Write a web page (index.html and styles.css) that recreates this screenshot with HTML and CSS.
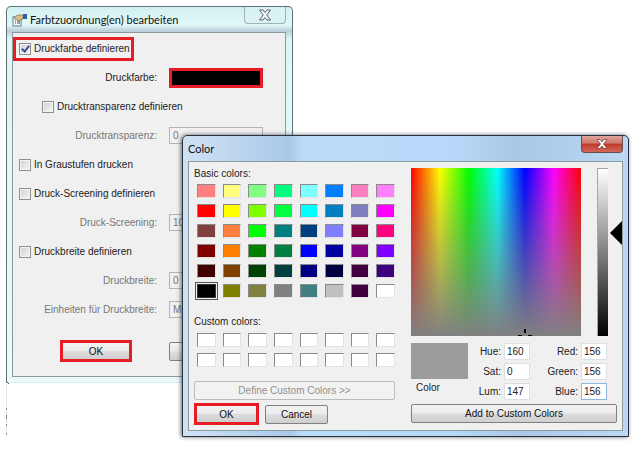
FILE: index.html
```
<!DOCTYPE html>
<html lang="de">
<head>
    <meta charset="utf-8">
    <title>Farbtzuordnung(en) bearbeiten</title>
    <meta name="viewport" content="width=device-width, initial-scale=1.0">
    <link rel="stylesheet" href="styles.css">
</head>
<body>
    <!-- Plot settings window -->
    <section class="window settings-window">
        <header class="titlebar">
            <svg class="app-icon" width="15" height="14" viewBox="0 0 15 14" aria-hidden="true">
                <rect x="1" y="4" width="8" height="9" fill="#f4f8fb" stroke="#56809c"/>
                <path d="M3 8h1M3 10h1M5 8h3M5 10h3" stroke="#456"/>
                <path d="M2 4l4-2 5 0v4l-3 1-1 2-1-2-3-1z" fill="#d9c08a" stroke="#80704c" stroke-width=".7"/>
                <rect x="11" y="1" width="4" height="5" fill="#2a62b8"/>
            </svg>
            <h1 class="title">Farbtzuordnung(en) bearbeiten</h1>
            <button class="close-btn close-glass" aria-label="Schließen">
                <svg width="14" height="12" viewBox="0 0 14 12"><path d="M1.500 1h3.500l2 2.500 2-2.500h3.500l-3.700 5 3.700 5h-3.500l-2-2.500-2 2.500h-3.500l3.700-5z" fill="#f4f8f8" stroke="#5c6468"/></svg>
            </button>
        </header>
        <form class="client settings-form">
            <div class="row"><label class="check marked"><input type="checkbox" checked>Druckfarbe definieren</label></div>
            <div class="row field-row">
                <label for="farbe">Druckfarbe:</label>
                <button type="button" id="farbe" class="ink marked" aria-label="Druckfarbe"></button>
            </div>
            <div class="row indent"><label class="check"><input type="checkbox">Drucktransparenz definieren</label></div>
            <div class="row field-row off">
                <label for="transparenz">Drucktransparenz:</label>
                <input type="text" id="transparenz" value="0" disabled>
            </div>
            <div class="row"><label class="check"><input type="checkbox">In Graustufen drucken</label></div>
            <div class="row"><label class="check"><input type="checkbox">Druck-Screening definieren</label></div>
            <div class="row field-row off">
                <label for="screening">Druck-Screening:</label>
                <input type="text" id="screening" value="100" disabled>
            </div>
            <div class="row"><label class="check"><input type="checkbox">Druckbreite definieren</label></div>
            <div class="row field-row off">
                <label for="breite">Druckbreite:</label>
                <input type="text" id="breite" value="0" disabled>
            </div>
            <div class="row field-row off">
                <label for="einheiten">Einheiten für Druckbreite:</label>
                <select id="einheiten" disabled><option>Millimeter</option></select>
            </div>
            <div class="settings-buttons">
                <span class="marked"><button type="button" class="btn">OK</button></span>
                <button type="button" class="btn" aria-label="Abbrechen"></button>
            </div>
        </form>
    </section>

    <svg class="specks" width="3" height="56" viewBox="0 0 3 56" aria-hidden="true">
        <path d="M0 0l3 3" stroke="#555"/>
        <path d="M.5 4v50" stroke="#e4e4e4"/>
        <path d="M.5 27v2M.5 34v4M.5 43v2M.5 52v2" stroke="#888"/>
    </svg>

    <!-- Color picker window -->
    <section class="window color-window" lang="en">
        <header class="titlebar">
            <h2 class="title">Color</h2>
            <button class="close-btn close-red" aria-label="Close">
                <svg width="12" height="10" viewBox="0 0 12 10"><path d="M1 .5h3l2 2.500 2-2.500h3l-3.500 4.500 3.500 4.500h-3l-2-2.500-2 2.500h-3l3.500-4.500z" fill="#fff" stroke="#6e3a38" stroke-width=".7"/></svg>
            </button>
        </header>
        <form class="client picker">
            <div class="palette">
                <p class="caption">Basic colors:</p>
                <div class="swatches" id="basic"></div>
                <p class="caption custom-caption">Custom colors:</p>
                <div class="swatches" id="custom"></div>
                <button type="button" class="btn define-btn" disabled>Define Custom Colors &gt;&gt;</button>
                <div class="picker-buttons">
                    <span class="marked"><button type="button" class="btn">OK</button></span>
                    <button type="button" class="btn">Cancel</button>
                </div>
            </div>
            <div class="mixer">
                <div class="fields">
                    <div class="spectrum">
                        <svg class="cross" width="14" height="7" viewBox="0 0 14 7" aria-hidden="true"><path d="M6 0h2v4h-2zM0 6h4v1h-4zM10 6h4v1h-4z"/></svg>
                    </div>
                    <div class="lum-bar"></div>
                    <svg class="lum-arrow" width="12" height="24" viewBox="0 0 12 24" aria-hidden="true"><path d="M12 0v24l-12-12z"/></svg>
                </div>
                <div class="values">
                    <div class="preview">
                        <div class="preview-color"></div>
                        <span>Color</span>
                    </div>
                    <div class="numbers">
                        <label for="hue">Hue:</label><input type="text" id="hue" value="160">
                        <label for="red">Red:</label><input type="text" id="red" value="156">
                        <label for="sat">Sat:</label><input type="text" id="sat" value="0">
                        <label for="green">Green:</label><input type="text" id="green" value="156">
                        <label for="lum">Lum:</label><input type="text" id="lum" value="147">
                        <label for="blue">Blue:</label><input type="text" id="blue" class="active" value="156">
                    </div>
                </div>
                <button type="button" class="btn add-btn">Add to Custom Colors</button>
            </div>
        </form>
    </section>

    <script>
        const basicColors = [
            '#ff8080', '#ffff80', '#80ff80', '#00ff80', '#80ffff', '#0080ff', '#ff80c0', '#ff80ff',
            '#ff0000', '#ffff00', '#80ff00', '#00ff40', '#00ffff', '#0080c0', '#8080c0', '#ff00ff',
            '#804040', '#ff8040', '#00ff00', '#008080', '#004080', '#8080ff', '#800040', '#ff0080',
            '#800000', '#ff8000', '#008000', '#008040', '#0000ff', '#0000a0', '#800080', '#8000ff',
            '#400000', '#804000', '#004000', '#004040', '#000080', '#000040', '#400040', '#400080',
            '#000000', '#808000', '#808040', '#808080', '#408080', '#c0c0c0', '#400040', '#ffffff'
        ];

        function addSwatches(id, colors, selected) {
            const box = document.getElementById(id);
            colors.forEach((color, i) => {
                const btn = document.createElement('button');
                btn.type = 'button';
                btn.className = i === selected ? 'swatch selected' : 'swatch';
                btn.style.backgroundColor = color;
                btn.setAttribute('aria-label', color);
                box.appendChild(btn);
            });
        }

        addSwatches('basic', basicColors, 40);
        addSwatches('custom', Array(16).fill('#ffffff'), -1);
    </script>
</body>
</html>
```
FILE: styles.css
```
* {
    box-sizing: border-box;
}
body {
    margin: 0;
    min-height: 100vh;
    background: #fff;
    color: #222;
    font-family: "Liberation Sans", Arial, sans-serif;
    font-size: 10px;
    line-height: 12px;
}
button, input, select {
    font: inherit;
    color: inherit;
    margin: 0;
    padding: 0;
}
/* Windows */
.window {
    position: absolute;
    border: 1px solid #5f7376;
    border-radius: 5px 5px 0 0;
}
.settings-window {
    left: 6px;
    top: 6px;
    width: 45%;
    padding: 0 6px 5px 5px;
    background: linear-gradient(#d2f0f0, #e2f8f9 18px, #b9cfda 24px, #dff5f6 32px, #eafafa);
    border-bottom-color: #d5eeee;
}
.color-window {
    left: 182px;
    right: 8px;
    top: 135px;
    padding: 0 5px 5px;
    border-color: #26323f;
    background: linear-gradient(90deg, #cfe2f5, #a9c8e8 24%, #bcdcfb 27%, #b7d8f8 60%, #a9c8e6 75%, #bcd8f3);
    box-shadow: -1px 0 4px rgba(0, 0, 0, 0.6);
}
.titlebar {
    display: flex;
    align-items: center;
    height: 25px;
}
.title {
    flex: 1;
    margin: 0;
    font-family: Lato, "Noto Sans", sans-serif;
    font-size: 11px;
    line-height: 16px;
    font-weight: normal;
    color: #111;
}
.app-icon {
    margin-right: 3px;
}
.close-btn {
    display: flex;
    align-items: center;
    justify-content: center;
    align-self: flex-start;
    width: 42px;
    height: 17px;
    border: 1px solid #9fb3b6;
    border-top: 0;
    border-radius: 0 0 4px 4px;
}
.close-glass {
    background: #d9f3f4;
}
.close-red {
    border-color: #6b4a50;
    background: linear-gradient(#e0a49c, #d0776c 45%, #bd3a2b 50%, #d4685a);
}
.client {
    border: 1px solid #8b9a9d;
    background: #f0f0f0;
}
.marked {
    border: 3px solid #e81c24;
}
/* Remains of the window behind */
.specks {
    position: absolute;
    left: 6px;
    top: 381px;
}
/* Settings form */
.settings-form {
    padding: 1px 0 14px;
}
.row {
    display: flex;
    align-items: center;
    height: 29px;
    padding-left: 6px;
}
.indent {
    padding-left: 29px;
}
.check {
    display: flex;
    align-items: center;
    gap: 3px;
}
.check.marked {
    height: 24px;
    margin-left: -6px;
    padding: 0 1px 0 3px;
}
.check input {
    appearance: none;
    width: 12px;
    height: 12px;
    border: 1px solid #8e8f8f;
    background: linear-gradient(135deg, #cdd0d4, #f6f6f6);
    box-shadow: inset 0 0 0 1px #f4f4f4;
}
.check input:checked::before {
    content: "";
    display: block;
    width: 3px;
    height: 6px;
    margin: 0 auto;
    border: solid #3a4f94;
    border-width: 0 2px 2px 0;
    transform: rotate(40deg);
}
.field-row {
    display: grid;
    grid-template-columns: 144px 94px;
    gap: 12px;
    padding-left: 0;
}
.field-row label {
    text-align: right;
}
.off {
    color: #777;
}
.off input, .off select {
    appearance: none;
    height: 17px;
    padding: 0 3px;
    border: 1px solid #b5b5b5;
    border-radius: 0;
    background: #f0f0f0;
    color: #777;
    opacity: 1;
}
.ink {
    height: 20px;
    background: #000;
}
/* Buttons */
.btn {
    height: 19px;
    padding-top: 1px;
    border: 1px solid #808080;
    border-radius: 2px;
    background: linear-gradient(#f3f3f3, #ebebeb 48%, #dcdcdc 52%, #cfcfcf);
    color: #111;
}
.btn:disabled {
    border-color: #bcbcbc;
    background: #f2f2f2;
    color: #909090;
}
.marked > .btn {
    display: block;
    width: 100%;
    height: 16px;
    padding-top: 2px;
    border: 0;
    border-radius: 0;
}
.settings-buttons {
    display: grid;
    grid-template-columns: 72px 94px;
    gap: 37px;
    align-items: center;
    padding: 16px 0 0 47px;
}
/* Color picker */
.picker {
    display: grid;
    grid-template-columns: 201fr 211fr;
    gap: 16px;
    padding: 6px 0 5px 5px;
}
.palette {
    display: flex;
    flex-direction: column;
}
.caption {
    margin: 0 0 4px;
}
.swatches {
    display: grid;
    grid-template-columns: repeat(8, 1fr);
    gap: 6px 7px;
    padding: 0 0 0 3px;
}
.swatch {
    height: 14px;
    border: 1px solid #8a8a8a;
    border-right-color: #e3e3e3;
    border-bottom-color: #e3e3e3;
}
.swatch.selected {
    border-color: #333;
    outline: 1px solid #555;
    outline-offset: 1px;
}
.custom-caption {
    margin: 18px 0 5px;
}
.define-btn {
    margin: 14px 0 3px;
}
.picker-buttons {
    display: grid;
    grid-template-columns: 65px 63px;
    gap: 6px;
    align-items: center;
}
.mixer {
    display: flex;
    flex-direction: column;
}
.fields {
    display: flex;
    height: 168px;
}
.spectrum {
    position: relative;
    flex: 1;
    background:
        linear-gradient(rgba(128, 128, 128, 0), #808080),
        linear-gradient(90deg, #f00, #ff0 17%, #0f0 34%, #0ff 51%, #00f 67%, #f0f 84%, #f00);
}
.cross {
    position: absolute;
    left: 63%;
    bottom: 0;
}
.lum-bar {
    width: 11px;
    margin: 0 2px 0 16px;
    border: solid #a8a8a8;
    border-width: 1px 0 0 1px;
    background: linear-gradient(#fff, #808080 50%, #000);
}
.lum-arrow {
    margin-top: 53px;
}
.values {
    display: flex;
    gap: 6px;
    margin: 7px 15px 4px 0;
}
.preview {
    width: 57px;
}
.preview-color {
    height: 36px;
    margin-bottom: 3px;
    background: #9c9c9c;
}
.preview span {
    padding-left: 5px;
}
.numbers {
    flex: 1;
    display: grid;
    grid-template-columns: 27px 26px 1fr 26px;
    gap: 3px;
    align-items: center;
}
.numbers label {
    text-align: right;
}
.numbers input {
    width: 26px;
    height: 17px;
    padding: 0 2px;
    border: 1px solid #dcdfe4;
    background: #fff;
}
.numbers input.active {
    border-color: #8fb8e0;
}
.add-btn {
    margin-right: 5px;
}
```
